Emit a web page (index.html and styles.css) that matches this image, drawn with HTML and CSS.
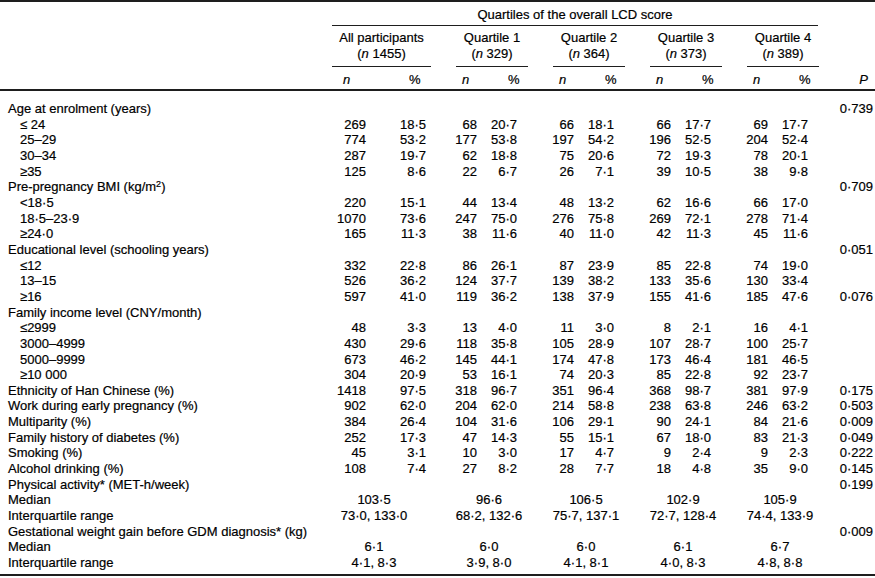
FILE: index.html
```html
<!DOCTYPE html>
<html lang="en">
<head>
<meta charset="utf-8">
<title>Characteristics by quartiles of the overall LCD score</title>
<link rel="stylesheet" href="styles.css">
</head>
<body>
<table class="tbl">
  <colgroup>
    <col class="c-label">
    <col class="c-an"><col class="c-ap">
    <col class="c-qn"><col class="c-qp">
    <col class="c-qn"><col class="c-qp">
    <col class="c-qn"><col class="c-qp">
    <col class="c-qn"><col class="c-qp">
    <col class="c-p">
  </colgroup>
  <thead>
    <tr class="h1">
      <th></th>
      <th colspan="10"><div class="rule-top">Quartiles of the overall LCD score</div></th>
      <th></th>
    </tr>
    <tr class="h2">
      <th></th>
      <th colspan="2"><div class="grp grp-all">All participants<br>(<i>n</i> 1455)</div></th>
      <th colspan="2"><div class="grp">Quartile 1<br>(<i>n</i> 329)</div></th>
      <th colspan="2"><div class="grp">Quartile 2<br>(<i>n</i> 364)</div></th>
      <th colspan="2"><div class="grp">Quartile 3<br>(<i>n</i> 373)</div></th>
      <th colspan="2"><div class="grp">Quartile 4<br>(<i>n</i> 389)</div></th>
      <th></th>
    </tr>
    <tr class="h3">
      <th></th>
      <th class="hn-all"><i>n</i></th><th class="hp-all">%</th>
      <th class="hn"><i>n</i></th><th class="hp">%</th>
      <th class="hn"><i>n</i></th><th class="hp">%</th>
      <th class="hn"><i>n</i></th><th class="hp">%</th>
      <th class="hn"><i>n</i></th><th class="hp">%</th>
      <th class="hP"><i>P</i></th>
    </tr>
  </thead>
  <tbody>
    <tr class="first"><td class="lab">Age at enrolment (years)</td><td></td><td></td><td></td><td></td><td></td><td></td><td></td><td></td><td></td><td></td><td class="pv">0·739</td></tr>
    <tr><td class="sub">≤ 24</td><td class="an">269</td><td class="ap">18·5</td><td class="qn">68</td><td class="qp">20·7</td><td class="qn">66</td><td class="qp">18·1</td><td class="qn">66</td><td class="qp">17·7</td><td class="qn">69</td><td class="qp">17·7</td><td class="pv"></td></tr>
    <tr><td class="sub">25–29</td><td class="an">774</td><td class="ap">53·2</td><td class="qn">177</td><td class="qp">53·8</td><td class="qn">197</td><td class="qp">54·2</td><td class="qn">196</td><td class="qp">52·5</td><td class="qn">204</td><td class="qp">52·4</td><td class="pv"></td></tr>
    <tr><td class="sub">30–34</td><td class="an">287</td><td class="ap">19·7</td><td class="qn">62</td><td class="qp">18·8</td><td class="qn">75</td><td class="qp">20·6</td><td class="qn">72</td><td class="qp">19·3</td><td class="qn">78</td><td class="qp">20·1</td><td class="pv"></td></tr>
    <tr><td class="sub">≥35</td><td class="an">125</td><td class="ap">8·6</td><td class="qn">22</td><td class="qp">6·7</td><td class="qn">26</td><td class="qp">7·1</td><td class="qn">39</td><td class="qp">10·5</td><td class="qn">38</td><td class="qp">9·8</td><td class="pv"></td></tr>
    <tr><td class="lab">Pre-pregnancy BMI (kg/m<sup>2</sup>)</td><td></td><td></td><td></td><td></td><td></td><td></td><td></td><td></td><td></td><td></td><td class="pv">0·709</td></tr>
    <tr><td class="sub">&lt;18·5</td><td class="an">220</td><td class="ap">15·1</td><td class="qn">44</td><td class="qp">13·4</td><td class="qn">48</td><td class="qp">13·2</td><td class="qn">62</td><td class="qp">16·6</td><td class="qn">66</td><td class="qp">17·0</td><td class="pv"></td></tr>
    <tr><td class="sub">18·5–23·9</td><td class="an">1070</td><td class="ap">73·6</td><td class="qn">247</td><td class="qp">75·0</td><td class="qn">276</td><td class="qp">75·8</td><td class="qn">269</td><td class="qp">72·1</td><td class="qn">278</td><td class="qp">71·4</td><td class="pv"></td></tr>
    <tr><td class="sub">≥24·0</td><td class="an">165</td><td class="ap">11·3</td><td class="qn">38</td><td class="qp">11·6</td><td class="qn">40</td><td class="qp">11·0</td><td class="qn">42</td><td class="qp">11·3</td><td class="qn">45</td><td class="qp">11·6</td><td class="pv"></td></tr>
    <tr><td class="lab">Educational level (schooling years)</td><td></td><td></td><td></td><td></td><td></td><td></td><td></td><td></td><td></td><td></td><td class="pv">0·051</td></tr>
    <tr><td class="sub">≤12</td><td class="an">332</td><td class="ap">22·8</td><td class="qn">86</td><td class="qp">26·1</td><td class="qn">87</td><td class="qp">23·9</td><td class="qn">85</td><td class="qp">22·8</td><td class="qn">74</td><td class="qp">19·0</td><td class="pv"></td></tr>
    <tr><td class="sub">13–15</td><td class="an">526</td><td class="ap">36·2</td><td class="qn">124</td><td class="qp">37·7</td><td class="qn">139</td><td class="qp">38·2</td><td class="qn">133</td><td class="qp">35·6</td><td class="qn">130</td><td class="qp">33·4</td><td class="pv"></td></tr>
    <tr><td class="sub">≥16</td><td class="an">597</td><td class="ap">41·0</td><td class="qn">119</td><td class="qp">36·2</td><td class="qn">138</td><td class="qp">37·9</td><td class="qn">155</td><td class="qp">41·6</td><td class="qn">185</td><td class="qp">47·6</td><td class="pv">0·076</td></tr>
    <tr><td class="lab">Family income level (CNY/month)</td><td></td><td></td><td></td><td></td><td></td><td></td><td></td><td></td><td></td><td></td><td class="pv"></td></tr>
    <tr><td class="sub">≤2999</td><td class="an">48</td><td class="ap">3·3</td><td class="qn">13</td><td class="qp">4·0</td><td class="qn">11</td><td class="qp">3·0</td><td class="qn">8</td><td class="qp">2·1</td><td class="qn">16</td><td class="qp">4·1</td><td class="pv"></td></tr>
    <tr><td class="sub">3000–4999</td><td class="an">430</td><td class="ap">29·6</td><td class="qn">118</td><td class="qp">35·8</td><td class="qn">105</td><td class="qp">28·9</td><td class="qn">107</td><td class="qp">28·7</td><td class="qn">100</td><td class="qp">25·7</td><td class="pv"></td></tr>
    <tr><td class="sub">5000–9999</td><td class="an">673</td><td class="ap">46·2</td><td class="qn">145</td><td class="qp">44·1</td><td class="qn">174</td><td class="qp">47·8</td><td class="qn">173</td><td class="qp">46·4</td><td class="qn">181</td><td class="qp">46·5</td><td class="pv"></td></tr>
    <tr><td class="sub">≥10 000</td><td class="an">304</td><td class="ap">20·9</td><td class="qn">53</td><td class="qp">16·1</td><td class="qn">74</td><td class="qp">20·3</td><td class="qn">85</td><td class="qp">22·8</td><td class="qn">92</td><td class="qp">23·7</td><td class="pv"></td></tr>
    <tr><td class="lab">Ethnicity of Han Chinese (%)</td><td class="an">1418</td><td class="ap">97·5</td><td class="qn">318</td><td class="qp">96·7</td><td class="qn">351</td><td class="qp">96·4</td><td class="qn">368</td><td class="qp">98·7</td><td class="qn">381</td><td class="qp">97·9</td><td class="pv">0·175</td></tr>
    <tr><td class="lab">Work during early pregnancy (%)</td><td class="an">902</td><td class="ap">62·0</td><td class="qn">204</td><td class="qp">62·0</td><td class="qn">214</td><td class="qp">58·8</td><td class="qn">238</td><td class="qp">63·8</td><td class="qn">246</td><td class="qp">63·2</td><td class="pv">0·503</td></tr>
    <tr><td class="lab">Multiparity (%)</td><td class="an">384</td><td class="ap">26·4</td><td class="qn">104</td><td class="qp">31·6</td><td class="qn">106</td><td class="qp">29·1</td><td class="qn">90</td><td class="qp">24·1</td><td class="qn">84</td><td class="qp">21·6</td><td class="pv">0·009</td></tr>
    <tr><td class="lab">Family history of diabetes (%)</td><td class="an">252</td><td class="ap">17·3</td><td class="qn">47</td><td class="qp">14·3</td><td class="qn">55</td><td class="qp">15·1</td><td class="qn">67</td><td class="qp">18·0</td><td class="qn">83</td><td class="qp">21·3</td><td class="pv">0·049</td></tr>
    <tr><td class="lab">Smoking (%)</td><td class="an">45</td><td class="ap">3·1</td><td class="qn">10</td><td class="qp">3·0</td><td class="qn">17</td><td class="qp">4·7</td><td class="qn">9</td><td class="qp">2·4</td><td class="qn">9</td><td class="qp">2·3</td><td class="pv">0·222</td></tr>
    <tr><td class="lab">Alcohol drinking (%)</td><td class="an">108</td><td class="ap">7·4</td><td class="qn">27</td><td class="qp">8·2</td><td class="qn">28</td><td class="qp">7·7</td><td class="qn">18</td><td class="qp">4·8</td><td class="qn">35</td><td class="qp">9·0</td><td class="pv">0·145</td></tr>
    <tr><td class="lab">Physical activity* (MET-h/week)</td><td></td><td></td><td></td><td></td><td></td><td></td><td></td><td></td><td></td><td></td><td class="pv">0·199</td></tr>
    <tr><td class="lab">Median</td><td colspan="2" class="am">103·5</td><td colspan="2" class="qm">96·6</td><td colspan="2" class="qm">106·5</td><td colspan="2" class="qm">102·9</td><td colspan="2" class="qm">105·9</td><td class="pv"></td></tr>
    <tr><td class="lab">Interquartile range</td><td colspan="2" class="am">73·0, 133·0</td><td colspan="2" class="qm">68·2, 132·6</td><td colspan="2" class="qm">75·7, 137·1</td><td colspan="2" class="qm">72·7, 128·4</td><td colspan="2" class="qm">74·4, 133·9</td><td class="pv"></td></tr>
    <tr><td class="lab">Gestational weight gain before GDM diagnosis* (kg)</td><td></td><td></td><td></td><td></td><td></td><td></td><td></td><td></td><td></td><td></td><td class="pv">0·009</td></tr>
    <tr><td class="lab">Median</td><td colspan="2" class="am">6·1</td><td colspan="2" class="qm">6·0</td><td colspan="2" class="qm">6·0</td><td colspan="2" class="qm">6·1</td><td colspan="2" class="qm">6·7</td><td class="pv"></td></tr>
    <tr class="last"><td class="lab">Interquartile range</td><td colspan="2" class="am">4·1, 8·3</td><td colspan="2" class="qm">3·9, 8·0</td><td colspan="2" class="qm">4·1, 8·1</td><td colspan="2" class="qm">4·0, 8·3</td><td colspan="2" class="qm">4·8, 8·8</td><td class="pv"></td></tr>
  </tbody>
</table>
</body>
</html>
```

FILE: styles.css
```css
html, body {
  margin: 0;
  padding: 0;
  background: #ffffff;
}

body {
  font-family: "Liberation Sans", Arial, Helvetica, sans-serif;
  font-size: 13px;
  color: #000000;
  -webkit-text-stroke: 0.2px #000000;
}

.tbl {
  width: 875px;
  table-layout: fixed;
  border-collapse: separate;
  border-spacing: 0;
  border-top: 2px solid #1e1e1e;
}

.c-label { width: 332px; }
.c-an { width: 58px; }
.c-ap { width: 54px; }
.c-qn { width: 47px; }
.c-qp { width: 50px; }
.c-p { width: 43px; }

th,
td {
  padding: 0;
  font-weight: normal;
  white-space: nowrap;
}

th {
  line-height: 16px;
  vertical-align: bottom;
}

/* header row 1 */
.rule-top {
  padding: 5px 0 2px;
  margin-right: 14px;
  text-align: center;
  border-bottom: 1px solid #1e1e1e;
}

/* header row 2 */
.grp {
  padding: 4px 0;
  margin: 0 13px 0 12px;
  text-align: center;
  border-bottom: 1px solid #1e1e1e;
}

.grp.grp-all {
  margin: 0 13px 0 0;
}

/* header row 3 */
.h3 th {
  padding-top: 5px;
  padding-bottom: 1px;
  text-align: left;
  border-bottom: 2px solid #1e1e1e;
}

.h3 .hn-all { padding-left: 11px; }
.h3 .hp-all { padding-left: 19px; }
.h3 .hn { padding-left: 18px; }
.h3 .hp { padding-left: 17px; }
.h3 .hP { text-align: right; padding-right: 7px; }

/* body */
td {
  line-height: 15.66px;
  height: 15.66px;
  vertical-align: middle;
}

.first td { padding-top: 10px; }
.last td {
  padding-bottom: 3px;
  border-bottom: 2px solid #1e1e1e;
}

.lab { padding-left: 8px; }
.sub { padding-left: 20px; }

.an { text-align: right; padding-right: 24px; }
.ap { text-align: right; padding-right: 18px; }
.qn { text-align: right; padding-right: 14px; }
.qp { text-align: right; padding-right: 24px; }
.pv { text-align: right; padding-right: 2px; }

.am { text-align: center; padding-right: 28px; }
.qm { text-align: center; padding-right: 7px; }

sup {
  font-size: 9px;
  line-height: 0;
  vertical-align: 4px;
}
```
